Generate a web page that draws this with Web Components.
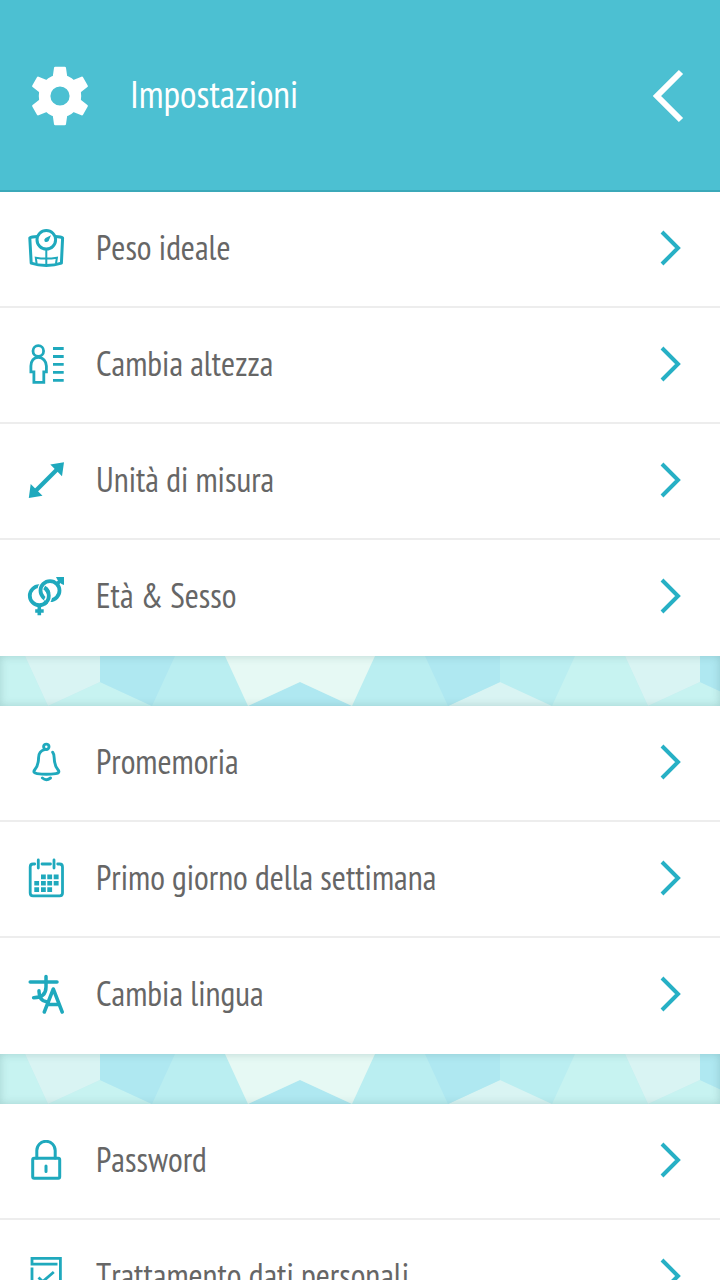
<!DOCTYPE html>
<html lang="it">
<head>
<meta charset="utf-8">
<meta name="viewport" content="width=device-width, initial-scale=1">
<title>Impostazioni</title>
<style>
  body { margin: 0; background: #fff; font-family: "PT Sans Narrow", "Liberation Sans Narrow", "Open Sans", sans-serif; font-kerning: none; }
</style>
</head>
<body>
<settings-page>
  <page-header slot="header">Impostazioni</page-header>
  <settings-group>
    <settings-row icon="scale">Peso ideale</settings-row>
    <settings-row icon="height">Cambia altezza</settings-row>
    <settings-row icon="units">Unità di misura</settings-row>
    <settings-row icon="gender">Età &amp; Sesso</settings-row>
  </settings-group>
  <pattern-divider></pattern-divider>
  <settings-group>
    <settings-row icon="bell">Promemoria</settings-row>
    <settings-row icon="calendar">Primo giorno della settimana</settings-row>
    <settings-row icon="language">Cambia lingua</settings-row>
  </settings-group>
  <pattern-divider></pattern-divider>
  <settings-group>
    <settings-row icon="lock">Password</settings-row>
    <settings-row icon="privacy">Trattamento dati personali</settings-row>
  </settings-group>
</settings-page>
<script>
const ICONS = {
  scale: `<g stroke-width="3"><circle cx="20.3" cy="11.8" r="9.300"/><path stroke-linejoin="round" d="M11.500 8.600C8 8.800 5 9.200 3.800 10L5.200 35.200C14 38.300 26.500 38.300 35.400 35.200L36.600 10C35.500 9.200 32.500 8.800 29.200 8.600"/></g><path stroke-width="2" d="M20.300 21.500V36M10.600 35.500L9.800 29.700Q20 31.500 30.900 29.700L30 35.500"/><path fill="currentColor" stroke="none" d="M25 7.300L22.600 13Q20.500 14.900 18.700 13.400Q17.400 11.500 19.500 9.900Z"/>`,
  height: `<g stroke-width="2.800"><circle cx="12.300" cy="7" r="5.300"/><path d="M12.300 13.300C7.500 13.300 4.900 17.500 4.900 22V27.800H7.900V38.400H17.800V27.800H20.400V22C20.400 17.500 17 13.300 12.300 13.300Z"/><path d="M27 4.500H37.700M27 12.500H37.700M27 20.400H37.700M27 28.400H37.700M27 36.300H37.700"/></g>`,
  units: `<path stroke-width="4.200" d="M9 31.500L32 8.500"/><path fill="currentColor" stroke="none" d="M38 2.300L24.300 4.600L36 16.300ZM2.800 38L4.700 24L16.500 35.800Z"/>`,
  gender: `<circle cx="13.300" cy="19.700" r="9.500" stroke-width="3.800"/><path stroke="#fff" stroke-width="6.400" d="M20 6.500A9.500 9.500 0 0 0 17 21.500"/><circle cx="24" cy="14.600" r="9.500" stroke-width="3.800"/><path stroke="#fff" stroke-width="6.600" d="M22.500 17A9.500 9.500 0 0 1 20.500 26"/><path stroke-width="3.800" d="M18.200 11.500A9.500 9.500 0 0 1 18.200 27.800M31 8L35.500 3.500"/><path stroke-width="3.600" d="M13.300 29V39.200M9.200 35H17.700"/><path fill="currentColor" stroke="none" d="M30 1H38V9L35.500 8L31.500 4Z"/>`,
  bell: `<g stroke-width="2.900"><circle cx="20.300" cy="4.800" r="2.700"/><path d="M18.600 7.600C14.500 8.600 12.700 11.500 12.600 15.500C12.500 22 11.500 24.500 8.900 27.500C6.700 30.200 8.600 31.300 11 31.600Q20.300 32.800 29.800 31.600C32.500 31.200 34 30 31.800 27.500C29.200 24.500 28.400 21.500 28.200 16C28.100 13 27.800 11.500 26.700 10.200"/><path d="M16.400 36Q20.300 39.400 24.500 36"/></g>`,
  calendar: `<g stroke-width="2.800"><path d="M8.700 6H7Q4.200 6 4.200 9V35Q4.200 37.800 7 37.800H33.700Q36.500 37.800 36.500 35V9Q36.500 6 33.700 6H31.700M16 6H24.500M12.300 2V10M28 2V10"/></g><g fill="currentColor" stroke="none"><path d="M15 16.600h4.800v4.600H15zM21.300 16.600h4.800v4.600h-4.800zM27.700 16.600h4.900v4.600h-4.900zM8.300 23h4.800v4.600H8.300zM15 23h4.800v4.600H15zM21.300 23h4.800v4.600h-4.800zM27.700 23h4.900v4.600h-4.900zM8.300 29.300h4.800v4.600H8.300zM15 29.300h4.800v4.600H15zM21.300 29.300h4.800v4.600h-4.800z"/></g>`,
  language: `<path stroke-width="3.500" stroke-linejoin="round" d="M4.200 8H31M20 2.600V13Q20 23.600 7.600 23.700M13 16.700Q12.800 26.500 20.500 27.800M18.300 38L27.300 15L36.200 38M22 30.600H33"/>`,
  lock: `<g stroke-width="3"><rect x="6.700" y="18.200" width="27" height="20" rx="1.500"/><path d="M10.800 18V10.500A9.200 9.200 0 0 1 29.200 10.500V18M20 26V31.500"/></g>`,
  privacy: `<g stroke-width="2.800"><path d="M31.500 8.200H6V2.300H34.400V38H6V11.500M12.500 21.500L16.700 25.500L27.800 16"/></g>`
};

function attach(el, html) {
  const template = document.createElement("template");
  template.innerHTML = html;
  el.attachShadow({ mode: "open" }).append(template.content.cloneNode(true));
}

customElements.define("settings-page", class extends HTMLElement {
  constructor() {
    super();
    attach(this, `<style>:host{display:block}</style><slot name="header"></slot><main><slot></slot></main>`);
  }
});

customElements.define("page-header", class extends HTMLElement {
  constructor() {
    super();
    const teeth = [0, 60, 120, 180, 240, 300].map(a =>
      `<path transform="rotate(${a})" d="M-6.400 -16L-4.700 -28H4.700L6.400 -16Z"/>`).join("");
    attach(this, `
      <style>
        :host{display:block;background:#4cc0d2;border-bottom:2px solid #3ba9b9;color:#fff}
        header{display:flex;align-items:center;gap:35px;padding:61px 32px 59px 25px}
        svg{display:block;flex:none}
        h1{flex:1;margin:0;padding-bottom:4px;font-size:38px;line-height:44px;font-weight:400}
        button{border:0;padding:4px;margin:0;background:none;color:inherit}
      </style>
      <header>
        <svg width="70" height="70" viewBox="-35 -35 70 70" aria-hidden="true">
          <circle r="15.400" fill="none" stroke="currentColor" stroke-width="11.600"/>
          <g fill="currentColor" stroke="currentColor" stroke-width="2.600" stroke-linejoin="round">${teeth}</g>
        </svg>
        <h1><slot></slot></h1>
        <button type="button" aria-label="Indietro"><svg width="32" height="54" viewBox="0 0 32 54" fill="none" stroke="currentColor" stroke-width="6"><path d="M29 3L5 27L29 51"/></svg></button>
      </header>`);
  }
});

customElements.define("settings-group", class extends HTMLElement {
  constructor() {
    super();
    attach(this, `
      <style>
        :host{display:block;background:#fff}
        ::slotted(*){border-bottom:2px solid #ededed}
        ::slotted(:last-child){border-bottom-color:#fff}
      </style><slot></slot>`);
  }
});

customElements.define("settings-row", class extends HTMLElement {
  constructor() {
    super();
    attach(this, `
      <style>
        :host{display:block;color:#666}
        a{display:flex;align-items:center;gap:30px;padding:36px 38px 38px 26px;color:inherit;text-decoration:none}
        svg{display:block;flex:none;fill:none;stroke:currentColor}
        .icon{color:#1fa9bd}
        .chevron{color:#27b0c5}
        span{flex:1;padding-bottom:2px;font-size:34px;line-height:38px}
      </style>
      <a href="#">
        <svg class="icon" width="40" height="40" viewBox="0 0 40 40" stroke-linecap="butt" aria-hidden="true">${ICONS[this.getAttribute("icon")]}</svg>
        <span><slot></slot></span>
        <svg class="chevron" width="22" height="36" viewBox="0 0 22 36" stroke-width="4" aria-hidden="true"><path d="M2 2L18 18L2 34"/></svg>
      </a>`);
    if (["bell", "calendar", "language", "lock"].includes(this.getAttribute("icon")))
      this.shadowRoot.querySelector(".icon").setAttribute("stroke-linecap", "round");
  }
});

customElements.define("pattern-divider", class extends HTMLElement {
  constructor() {
    super();
    attach(this, `
      <style>
        :host{display:grid;height:50px}
        svg,.shade{grid-area:1/1;width:100%;height:100%}
        .shade{box-shadow:inset 0 0 8px rgba(60,110,110,.25)}
      </style>
      <svg aria-hidden="true">
        <defs><pattern id="tiles" width="600" height="50" patternUnits="userSpaceOnUse">
          <path fill="#baeef1" d="M0 0H600V50H0Z"/>
          <path fill="#c7f3f1" d="M0 0H25L48 50H0ZM575 0H600V50H552ZM48 50L100 26L152 50Z"/>
          <path fill="#d9f4f3" d="M25 0H100V26L48 50ZM448 50L500 26L552 50Z"/>
          <path fill="#afe8f1" d="M100 0H175L152 50L100 26ZM248 50L300 26L352 50ZM425 0H500V26L448 50Z"/>
          <path fill="#e6f9f4" d="M225 0H375L352 50L300 26L248 50Z"/>
        </pattern></defs>
        <rect width="100%" height="100%" fill="url(#tiles)"/>
      </svg>
      <div class="shade"></div>`);
  }
});
</script>
</body>
</html>
